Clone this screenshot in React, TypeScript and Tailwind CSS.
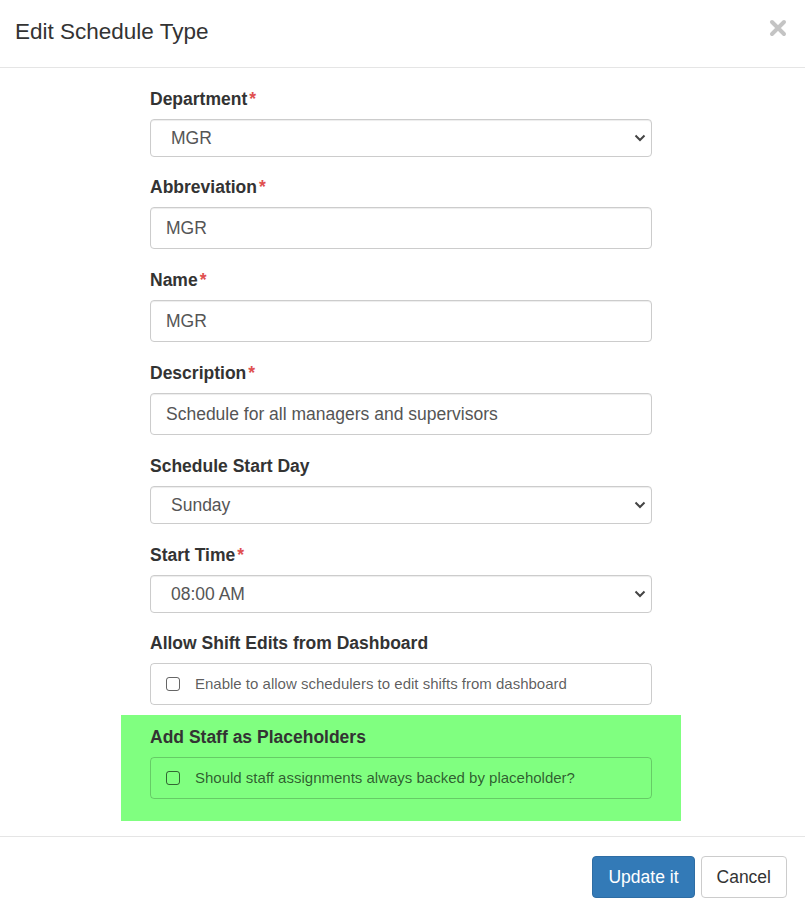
import React from "react";

const Label = ({ text, required }: { text: string; required?: boolean }) => (
  <label className="block h-[22px] mb-[9px] text-[17.5px] leading-[22px] font-bold text-[#333]">
    {text}
    {required && <span className="text-[#e05050] ml-[2px]">*</span>}
  </label>
);

const Chevron = () => (
  <svg
    className="pointer-events-none absolute right-[6px] top-1/2 -translate-y-1/2"
    width="12"
    height="8"
    viewBox="0 0 12 8"
  >
    <path d="M1.5 1.5 L6 6 L10.5 1.5" fill="none" stroke="#444" strokeWidth="2" />
  </svg>
);

const SelectField = ({ value }: { value: string }) => (
  <div className="relative">
    <select
      defaultValue={value}
      className="block w-full h-[38px] appearance-none rounded-[4px] border border-[#ccc] bg-white pl-[20px] pr-8 text-[17.5px] text-[#555] shadow-[inset_0_1px_1px_rgba(0,0,0,0.075)] outline-none"
    >
      <option>{value}</option>
    </select>
    <Chevron />
  </div>
);

const TextField = ({ value }: { value: string }) => (
  <input
    defaultValue={value}
    className="block w-full h-[42px] rounded-[4px] border border-[#ccc] bg-white px-[15px] text-[17.5px] text-[#555] shadow-[inset_0_1px_1px_rgba(0,0,0,0.075)] outline-none"
  />
);

const CheckField = ({ text }: { text: string }) => (
  <div className="flex h-[42px] items-center rounded-[4px] border border-black/20 pl-[15px]">
    <span className="inline-block h-[14px] w-[14px] rounded-[3px] border border-black/60" />
    <span className="ml-[15px] text-[15px] text-black/65">{text}</span>
  </div>
);

export default function App() {
  return (
    <div className="w-[805px] h-[914px] bg-white font-['Liberation_Sans',Arial,sans-serif]">
      {/* header */}
      <div className="flex h-[68px] items-center justify-between border-b border-[#e5e5e5] pl-[15px] pr-[18px]">
        <h4 className="text-[22.5px] text-[#333] -mt-[4px]">Edit Schedule Type</h4>
        <svg width="18" height="18" viewBox="0 0 18 18" className="-mt-[12px]">
          <path d="M3 3 L15 15 M15 3 L3 15" stroke="#c4c4c4" strokeWidth="4" strokeLinecap="round" />
        </svg>
      </div>

      {/* body */}
      <div className="pt-[20px] pb-[15px]">
        <div className="w-[502px] ml-[150px]">
          <Label text="Department" required />
          <SelectField value="MGR" />
          <div className="h-[19px]" />
          <Label text="Abbreviation" required />
          <TextField value="MGR" />
          <div className="h-[20px]" />
          <Label text="Name" required />
          <TextField value="MGR" />
          <div className="h-[20px]" />
          <Label text="Description" required />
          <TextField value="Schedule for all managers and supervisors" />
          <div className="h-[20px]" />
          <Label text="Schedule Start Day" />
          <SelectField value="Sunday" />
          <div className="h-[20px]" />
          <Label text="Start Time" required />
          <SelectField value="08:00 AM" />
          <div className="h-[19px]" />
          <Label text="Allow Shift Edits from Dashboard" />
          <CheckField text="Enable to allow schedulers to edit shifts from dashboard" />
          <div className="mt-[10px] -mx-[29px] bg-[#80ff80] px-[29px] pt-[11px] pb-[22px]">
            <Label text="Add Staff as Placeholders" />
            <CheckField text="Should staff assignments always backed by placeholder?" />
          </div>
        </div>
      </div>

      {/* footer */}
      <div className="flex justify-end gap-[6px] border-t border-[#e5e5e5] pt-[19px] pr-[18px]">
        <button className="h-[42px] rounded-[4px] border border-[#2e6da4] bg-[#337ab7] px-[15px] text-[17.5px] text-white">
          Update it
        </button>
        <button className="h-[42px] rounded-[4px] border border-[#ccc] bg-white px-[15px] text-[17.5px] text-[#333]">
          Cancel
        </button>
      </div>
    </div>
  );
}
